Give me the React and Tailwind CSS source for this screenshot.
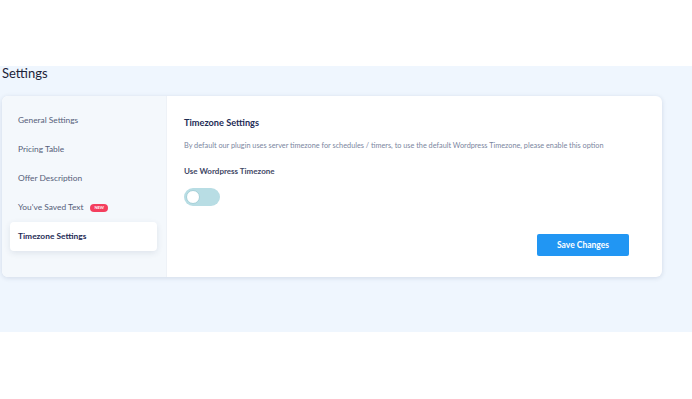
import { useState } from "react";

const menu = [
    { label: "General Settings" },
    { label: "Pricing Table" },
    { label: "Offer Description" },
    { label: "You've Saved Text", badge: true },
    { label: "Timezone Settings" },
];

function Sidebar({ active }) {
    return (
        <div className="w-[165px] shrink-0 bg-[#f4f8fc] border-r border-[#eef2f7] pl-2 pr-[9px] pt-[10px] pb-[26px] flex flex-col">
            {menu.map((item) => (
                <div
                    key={item.label}
                    className={`h-[29px] flex items-center gap-[7px] px-2 rounded-[4px] text-[8.4px] ${
                        active === item.label
                            ? "bg-white shadow-[0_2px_6px_rgba(30,50,90,0.10)] text-[#1e2b55] font-bold"
                            : "text-[#545e7a]"
                    }`}
                >
                    <span>{item.label}</span>
                    {item.badge && (
                        <span className="bg-[#f43f5e] text-white text-[4px] font-bold leading-none rounded-full px-[4px] py-[2px]">
                            NEW
                        </span>
                    )}
                </div>
            ))}
        </div>
    );
}

function Toggle() {
    const [on, setOn] = useState(false);
    return (
        <button
            type="button"
            onClick={() => setOn(!on)}
            className={`w-[36px] h-[18px] rounded-full p-[2px] flex items-center ${
                on ? "bg-[#2196f3] justify-end" : "bg-[#b8dde4] justify-start"
            }`}
        >
            <span className="w-[14px] h-[14px] rounded-full bg-white border border-[#a5d0d8]" />
        </button>
    );
}

export default function App() {
    return (
        <div className="w-[692px] h-[399px] bg-white font-['Lato',sans-serif]">
            <div className="h-[66px]" />
            <div className="bg-[#eff6fe] h-[266px] pr-[30px]">
                <h1 className="text-[13px] leading-[14px] text-[#1d2338] pl-[2px]">Settings</h1>
                <div className="mt-4 ml-[2px] bg-white rounded-[6px] shadow-[0_1px_5px_rgba(30,50,90,0.14)] flex overflow-hidden">
                    <Sidebar active="Timezone Settings" />
                    <div className="flex-1 pl-[17px] pr-[33px] pt-[20px] pb-[18px] flex flex-col">
                        <h2 className="text-[9.2px] font-bold text-[#1e2b55] leading-[14px]">Timezone Settings</h2>
                        <p className="mt-[11px] text-[7.3px] text-[#7b86a0] leading-[10px]">
                            By default our plugin uses server timezone for schedules / timers, to use the default Wordpress Timezone, please enable this option
                        </p>
                        <p className="mt-[15px] text-[8px] font-bold text-[#3f4866] leading-[10px]">Use Wordpress Timezone</p>
                        <div className="mt-[12px]">
                            <Toggle />
                        </div>
                        <div className="mt-[28px] flex justify-end">
                            <button
                                type="button"
                                className="w-[92px] h-[22px] bg-[#2196f3] rounded-[2px] text-white text-[8.5px] font-bold"
                            >
                                Save Changes
                            </button>
                        </div>
                    </div>
                </div>
            </div>
        </div>
    );
}
